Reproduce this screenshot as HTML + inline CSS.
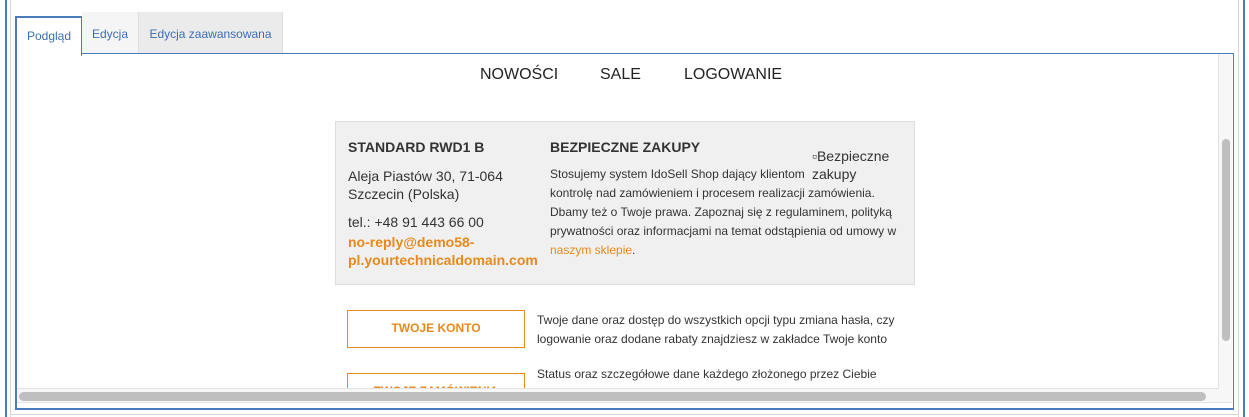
<!DOCTYPE html>
<html><head><meta charset="utf-8"><style>
*{margin:0;padding:0;box-sizing:border-box}
body{width:1249px;height:417px;overflow:hidden;background:#fff;font-family:"Liberation Sans",sans-serif;position:relative}
.a{position:absolute}
.tab{position:absolute;font-size:12px;color:#3d6eb4;text-align:center}
.or{color:#e8891c}
.t{color:#333}
</style></head><body>
<div class="a" style="left:5px;top:0;width:2px;height:417px;background:#4a7bbd"></div>
<div class="a" style="left:10px;top:0;width:1px;height:417px;background:#d6d6d6"></div>
<div class="a" style="left:1238px;top:0;width:1px;height:417px;background:#d6d6d6"></div>
<div class="a" style="left:1243px;top:0;width:2px;height:417px;background:#4a7bbd"></div>
<div class="a" style="left:10px;top:414px;width:1229px;height:1px;background:#d6d6d6"></div>

<div class="a" style="left:15px;top:53px;width:1219px;height:357px;border:1px solid #4a7bbd;border-width:1px 1px 2px 2px"></div>
<div class="tab" style="left:82px;top:12px;width:57px;height:41px;background:#f5f5f5;border-right:1px solid #ddd;line-height:44px">Edycja</div>
<div class="tab" style="left:139px;top:12px;width:144px;height:41px;background:#ebebeb;border-right:1px solid #ddd;line-height:44px">Edycja zaawansowana</div>
<div class="tab" style="left:15px;top:16px;width:67px;height:40px;background:#fff;border:1px solid #4a7bbd;border-width:2px 1px 0 2px;line-height:36px">Podgląd</div>

<div class="a" style="left:17px;top:388px;width:1201px;height:1px;background:#e2e2e2"></div>
<div class="a" style="left:17px;top:389px;width:1215px;height:14px;background:#f7f7f7;border-bottom:1px solid #e4e4e4"></div>
<div class="a" style="left:19px;top:392px;width:1187px;height:9px;background:#bfbfbf;border-radius:5px"></div>
<div class="a" style="left:1218px;top:54px;width:14px;height:335px;background:#f7f7f7;border-left:1px solid #e2e2e2"></div>
<div class="a" style="left:1222px;top:139px;width:8px;height:202px;background:#bfbfbf;border-radius:4px"></div>

<div class="a t" style="left:480px;top:66px;font-size:16px;color:#222">NOWOŚCI</div>
<div class="a t" style="left:600px;top:66px;font-size:16px;color:#222">SALE</div>
<div class="a t" style="left:684px;top:66px;font-size:16px;color:#222">LOGOWANIE</div>

<div class="a" style="left:335px;top:121px;width:580px;height:164px;background:#f0f0f0;border:1px solid #ddd"></div>
<div class="a t" style="left:348px;top:139px;font-size:14px;font-weight:bold">STANDARD RWD1 B</div>
<div class="a t" style="left:348px;top:167px;font-size:14px;line-height:18px">Aleja Piastów 30, 71-064<br>Szczecin (Polska)</div>
<div class="a t" style="left:348px;top:214px;font-size:14px">tel.: +48 91 443 66 00</div>
<div class="a or" style="left:348px;top:233px;font-size:14px;font-weight:bold;line-height:18px">no-reply@demo58-<br>pl.yourtechnicaldomain.com</div>
<div class="a t" style="left:550px;top:139px;font-size:14px;font-weight:bold">BEZPIECZNE ZAKUPY</div>
<div class="a t" style="left:550px;top:165px;width:350px;font-size:12px;line-height:19px">Stosujemy system IdoSell Shop dający klientom<br>kontrolę nad zamówieniem i procesem realizacji zamówienia.<br>Dbamy też o Twoje prawa. Zapoznaj się z regulaminem, polityką<br>prywatności oraz informacjami na temat odstąpienia od umowy w<br><span class="or">naszym sklepie</span>.</div>
<div class="a t" style="left:812px;top:147px;font-size:14px;line-height:18px">▫Bezpieczne<br>zakupy</div>

<div class="a or" style="left:347px;top:310px;width:178px;height:38px;border:1px solid #e8891c;font-size:12px;font-weight:bold;text-align:center;line-height:35px">TWOJE KONTO</div>
<div class="a t" style="left:537px;top:311px;font-size:12px;line-height:19px">Twoje dane oraz dostęp do wszystkich opcji typu zmiana hasła, czy<br>logowanie oraz dodane rabaty znajdziesz w zakładce Twoje konto</div>
<div class="a" style="left:17px;top:360px;width:1201px;height:28px;overflow:hidden">
<div class="a or" style="left:330px;top:13px;width:178px;height:38px;border:1px solid #e8891c;font-size:12px;font-weight:bold;text-align:center;line-height:35px">TWOJE ZAMÓWIENIA</div>
<div class="a t" style="left:520px;top:5px;font-size:12px;line-height:19px;white-space:nowrap">Status oraz szczegółowe dane każdego złożonego przez Ciebie<br>zamówienia znajdziesz w zakładce Twoje zamówienia</div>
</div>
</body></html>
